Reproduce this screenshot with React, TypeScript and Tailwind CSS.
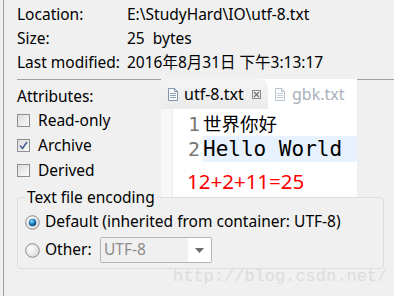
import React from "react";

const FONT = { fontFamily: '"Noto Sans", "Noto Sans CJK SC", sans-serif' };

function DocIcon({ faded }: { faded?: boolean }) {
  const stroke = faded ? "#b9c4cf" : "#7f93aa";
  const line = faded ? "#c9d2dc" : "#8fa3b8";
  return (
    <svg width="10" height="13" viewBox="0 0 10 13">
      <path d="M0.5 0.5 H6.5 L9.5 3.5 V12.5 H0.5 Z" fill="#fbfcfd" stroke={stroke} />
      <path d="M6.5 0.5 V3.5 H9.5" fill="none" stroke={stroke} />
      <path d="M2 5.5 H8 M2 7.5 H8 M2 9.5 H8" stroke={line} />
    </svg>
  );
}

function CloseIcon() {
  return (
    <svg width="9" height="9" viewBox="0 0 9 9">
      <rect x="0.5" y="0.5" width="8" height="8" fill="none" stroke="#8a8a8a" />
      <path d="M2 2 L7 7 M7 2 L2 7" stroke="#6f6f6f" strokeWidth="1.2" />
    </svg>
  );
}

function CheckBox({ checked }: { checked?: boolean }) {
  return (
    <div className="w-[13px] h-[13px] border border-[#8e8f8f] bg-gradient-to-br from-[#dcdcdc] to-[#fbfbfb] flex items-center justify-center">
      {checked && (
        <svg width="9" height="9" viewBox="0 0 9 9">
          <path d="M1 4.5 L3.5 7.5 L8 1" fill="none" stroke="#4a5f97" strokeWidth="1.6" />
        </svg>
      )}
    </div>
  );
}

function Radio({ checked }: { checked?: boolean }) {
  return (
    <svg width="15" height="15" viewBox="0 0 15 15">
      <defs>
        <radialGradient id="rbg" cx="0.35" cy="0.35" r="0.8">
          <stop offset="0" stopColor="#ffffff" />
          <stop offset="1" stopColor="#d6d6d6" />
        </radialGradient>
        <radialGradient id="dot" cx="0.4" cy="0.35" r="0.7">
          <stop offset="0" stopColor="#9be3ff" />
          <stop offset="0.5" stopColor="#1c7fc4" />
          <stop offset="1" stopColor="#0b3f6e" />
        </radialGradient>
      </defs>
      <circle cx="7.5" cy="7.5" r="6.8" fill="url(#rbg)" stroke="#8b8b8b" />
      {checked && <circle cx="7.5" cy="7.5" r="3.8" fill="url(#dot)" />}
    </svg>
  );
}

export default function App() {
  return (
    <div className="relative w-[394px] h-[296px] overflow-hidden bg-[#f0f0f0] text-black text-[15.5px]" style={FONT}>
      <div className="ml-[3px] h-full border-l border-[#a0a0a0] pl-[13px] pt-[3px]">
        <div className="flex h-[24px] items-center">
          <span className="w-[110px]">Location:</span>
          <span>E:\StudyHard\IO\utf-8.txt</span>
        </div>
        <div className="flex h-[24px] items-center">
          <span className="w-[110px]">Size:</span>
          <span>25&nbsp; bytes</span>
        </div>
        <div className="flex h-[24px] items-center">
          <span className="w-[110px]">Last modified:</span>
          <span>2016年8月31日 下午3:13:17</span>
        </div>
        <div className="mt-[4px] border-t border-[#a0a0a0]" />
        <div className="mt-[6px] flex h-[22px] items-center">Attributes:</div>
        <div className="flex h-[25px] items-center gap-[8px]">
          <CheckBox />
          <span>Read-only</span>
        </div>
        <div className="flex h-[25px] items-center gap-[8px]">
          <CheckBox checked />
          <span>Archive</span>
        </div>
        <div className="flex h-[25px] items-center gap-[8px]">
          <CheckBox />
          <span>Derived</span>
        </div>
        <fieldset className="mt-[4px] mr-[10px] border border-[#d5dfe5] rounded-[3px] pl-[7px] pb-[5px]">
          <legend className="px-[2px] leading-[20px]">Text file encoding</legend>
          <div className="flex h-[26px] items-center gap-[5px] mt-[2px]">
            <Radio checked />
            <span>Default (inherited from container: UTF-8)</span>
          </div>
          <div className="flex h-[26px] items-center gap-[5px] mt-[2px]">
            <Radio />
            <span className="w-[50px]">Other:</span>
            <div className="flex h-[26px] w-[112px] border border-[#b5b5b5] rounded-[2px] bg-white">
              <div className="flex-1 bg-[#f0f0f0] pl-[3px] flex items-center text-[#8d8d8d]">UTF-8</div>
              <div className="w-[23px] flex items-center justify-center">
                <svg width="9" height="5" viewBox="0 0 9 5">
                  <path d="M0 0 H9 L4.5 5 Z" fill="#6b6b6b" />
                </svg>
              </div>
            </div>
          </div>
        </fieldset>
      </div>

      {/* watermark */}
      <div
        className="absolute left-[173px] top-[266px] text-[17px] leading-[22px] text-[#dcdcdc]"
        style={{ fontFamily: '"Liberation Mono", monospace' }}
      >
        http://blog.csdn.net/
      </div>

      {/* pasted editor overlay */}
      <div className="absolute left-[161px] top-[79px] w-[196px] h-[118px] bg-white flex flex-col">
        <div className="flex h-[31px]">
          <div className="w-[107px] bg-gradient-to-b from-[#f4f4f4] to-[#ebebeb] rounded-tr-[8px] flex items-center pl-[7px] text-[16px]">
            <DocIcon />
            <span className="ml-[6px]">utf-8.txt</span>
            <span className="ml-[8px] flex items-center">
              <CloseIcon />
            </span>
          </div>
          <div className="flex items-center pl-[7px] text-[16px] text-[#a7b0bb]">
            <DocIcon faded />
            <span className="ml-[7px]">gbk.txt</span>
          </div>
        </div>
        <div className="flex flex-1">
          <div className="w-[12px] bg-[#f7f7f7] border-r border-[#ececec]" />
          <div className="flex-1 flex flex-col pt-[2px]" style={{ fontFamily: '"DejaVu Sans Mono", "Noto Sans CJK SC", monospace' }}>
            <div className="flex h-[25px] items-center">
              <span className="w-[30px] pr-[3px] text-right text-[20px] text-[#787878]">1</span>
              <span className="text-[18.5px]" style={FONT}>世界你好</span>
            </div>
            <div className="flex h-[26px] items-center">
              <span className="w-[30px] pr-[3px] text-right text-[20px] text-[#787878]">2</span>
              <span className="flex-1 h-full flex items-center bg-[#e8f2fe] text-[21px]">Hello World</span>
            </div>
            <div className="flex flex-1 items-center pl-[14px] pt-[4px] text-[20.5px] text-[#ff0000]" style={FONT}>
              12+2+11=25
            </div>
          </div>
        </div>
      </div>
    </div>
  );
}
